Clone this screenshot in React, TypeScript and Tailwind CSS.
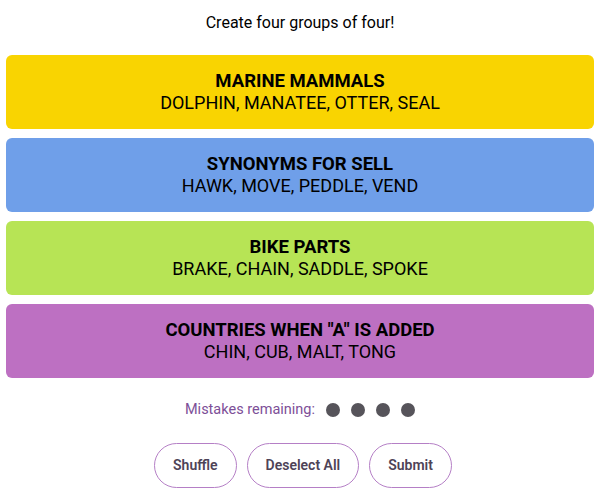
const groups = [
  { title: 'MARINE MAMMALS', words: 'DOLPHIN, MANATEE, OTTER, SEAL', color: 'bg-[#f9d401]' },
  { title: 'SYNONYMS FOR SELL', words: 'HAWK, MOVE, PEDDLE, VEND', color: 'bg-[#6f9fe9]' },
  { title: 'BIKE PARTS', words: 'BRAKE, CHAIN, SADDLE, SPOKE', color: 'bg-[#b7e455]' },
  { title: 'COUNTRIES WHEN "A" IS ADDED', words: 'CHIN, CUB, MALT, TONG', color: 'bg-[#bd70c2]' },
];

export default function App() {
  return (
    <div className="w-[600px] h-[494px] bg-white flex flex-col items-center text-black font-['Roboto',sans-serif]">
      <p className="mt-[12px] text-[16px] leading-[22px]">Create four groups of four!</p>

      <div className="mt-[21px] w-full px-[6px] flex flex-col gap-[9px]">
        {groups.map(g => (
          <div key={g.title} className={`${g.color} h-[74px] rounded-[6px] flex flex-col items-center justify-center`}>
            <div className="text-[18.5px] leading-[22px] font-bold">{g.title}</div>
            <div className="text-[18px] leading-[22px]">{g.words}</div>
          </div>
        ))}
      </div>

      <div className="mt-[21px] flex items-center">
        <span className="text-[14.5px] text-[#7d4f98] mr-[11px]">Mistakes remaining:</span>
        <div className="flex gap-[11px]">
          {[0, 1, 2, 3].map(i => (
            <span key={i} className="w-[14px] h-[14px] rounded-full bg-[#56545a]" />
          ))}
        </div>
      </div>

      <div className="mt-[22px] flex gap-[10px] pl-[6px]">
        {['Shuffle', 'Deselect All', 'Submit'].map(b => (
          <button
            key={b}
            className="h-[45px] px-[18px] rounded-full border border-[#b57fc6] text-[14px] font-semibold text-[#4e4357] bg-white"
          >
            {b}
          </button>
        ))}
      </div>
    </div>
  );
}
